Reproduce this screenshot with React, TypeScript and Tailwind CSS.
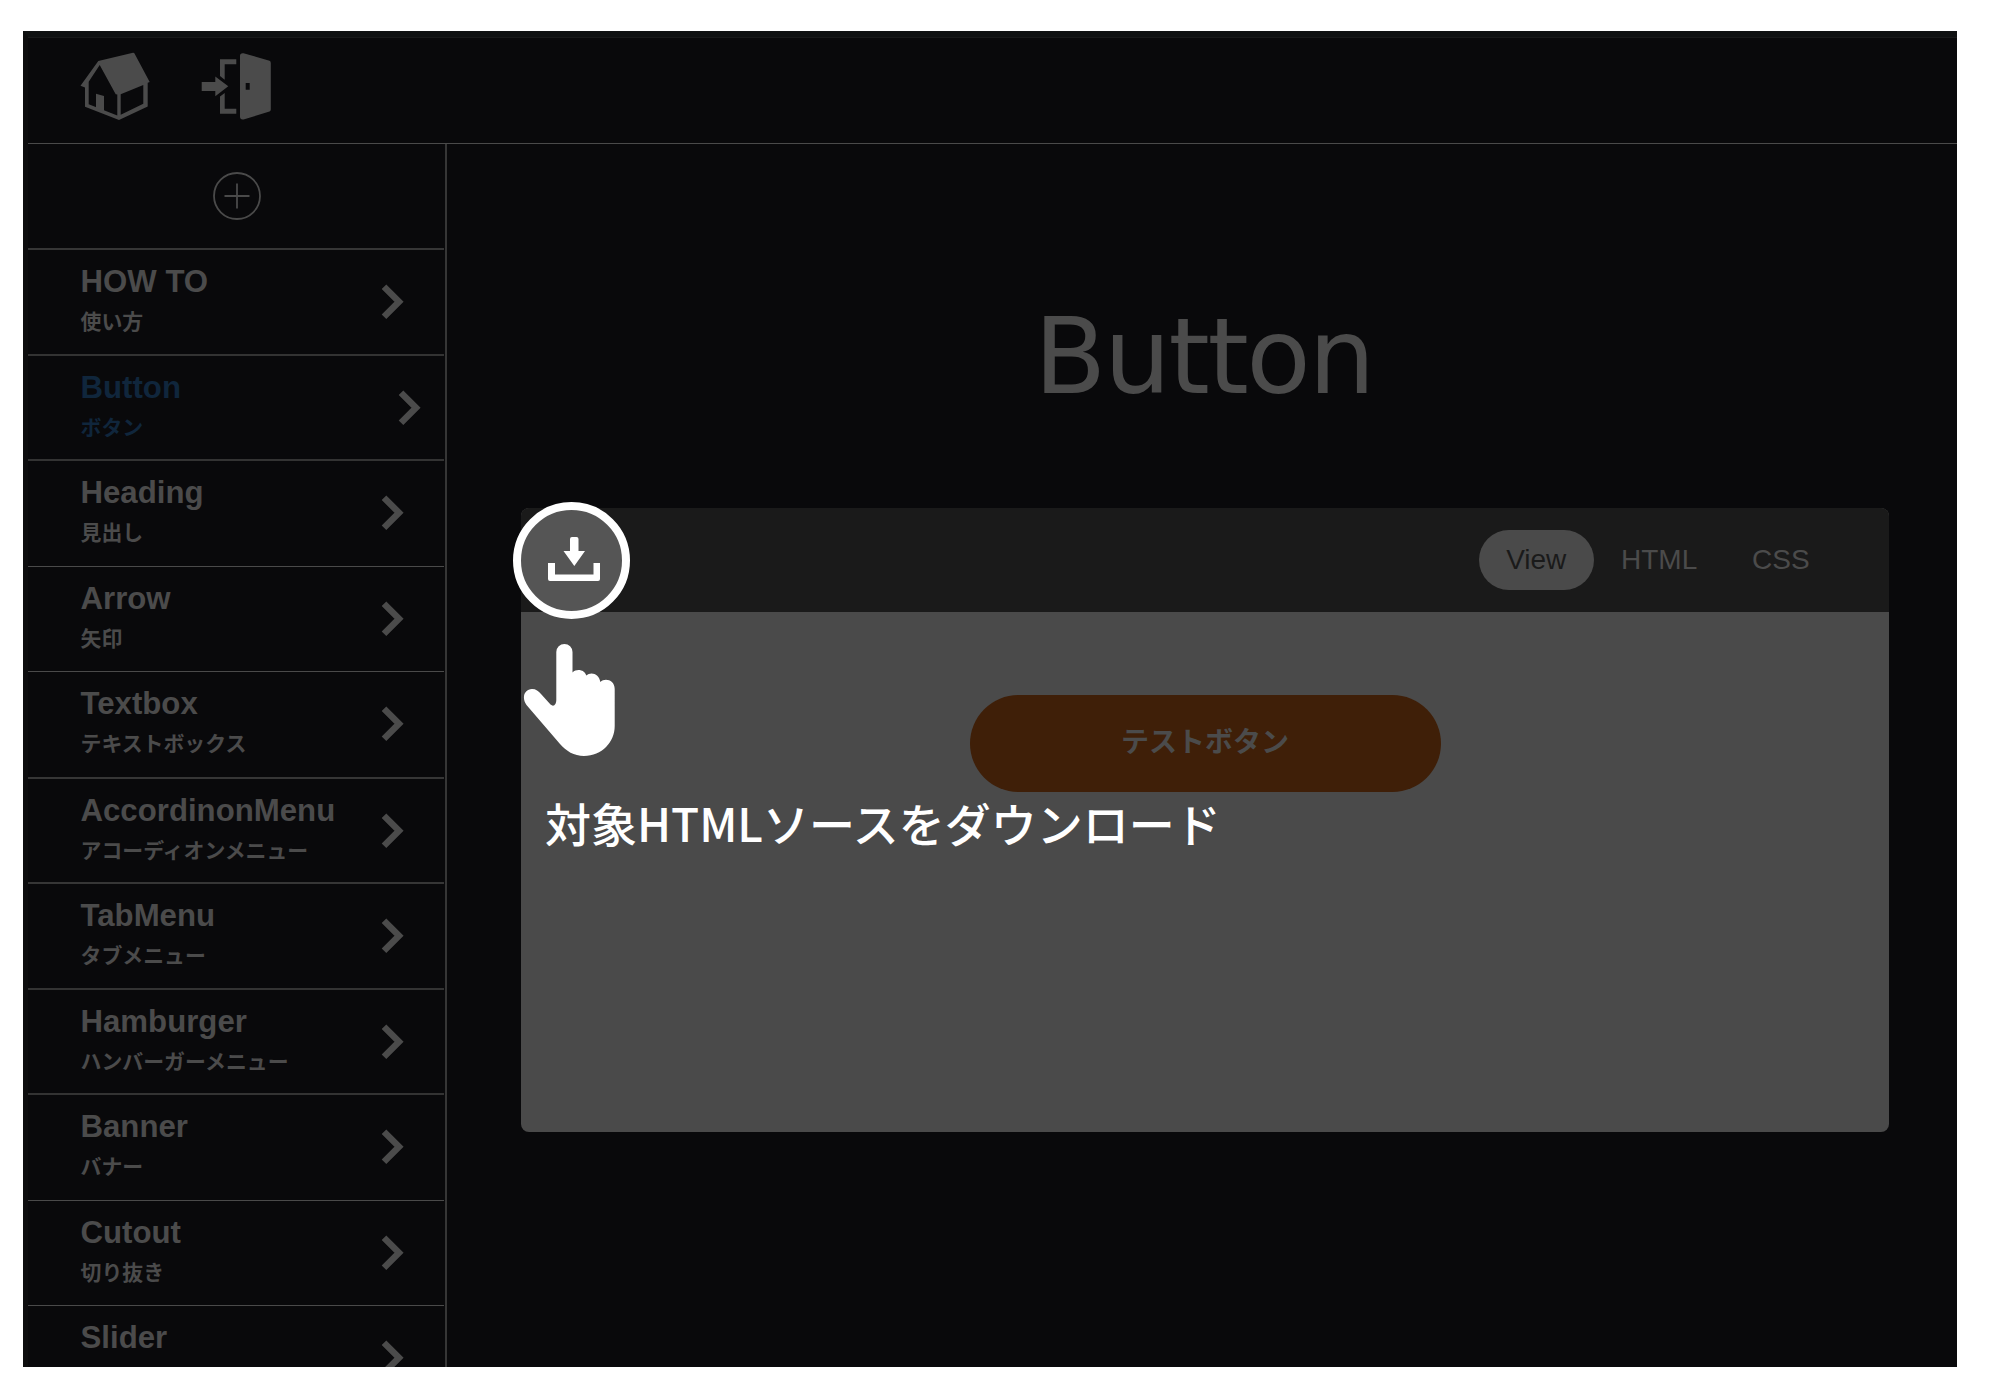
const items = [
  { en: 'HOW TO', ja: '使い方', line: 'h-[106px] border-b-2 border-[#333333]' },
  { en: 'Button', ja: 'ボタン', line: 'h-[105px] border-b-2 border-[#333333]', active: true },
  { en: 'Heading', ja: '見出し', line: 'h-[106px] border-b border-[#4a4a4a]' },
  { en: 'Arrow', ja: '矢印', line: 'h-[105px] border-b border-[#4a4a4a]' },
  { en: 'Textbox', ja: 'テキストボックス', line: 'h-[107px] border-b-2 border-[#363636]' },
  { en: 'AccordinonMenu', ja: 'アコーディオンメニュー', line: 'h-[105px] border-b-2 border-[#363636]' },
  { en: 'TabMenu', ja: 'タブメニュー', line: 'h-[106px] border-b-2 border-[#333333]' },
  { en: 'Hamburger', ja: 'ハンバーガーメニュー', line: 'h-[105px] border-b-2 border-[#333333]' },
  { en: 'Banner', ja: 'バナー', line: 'h-[106px] border-b border-[#4a4a4a]' },
  { en: 'Cutout', ja: '切り抜き', line: 'h-[105px] border-b border-[#4a4a4a]' },
  { en: 'Slider', ja: '', line: 'h-[106px]' },
];

function HouseIcon() {
  return (
    <svg width="70" height="69" viewBox="0 0 70 69" fill="#4b4b4b" fillRule="evenodd">
      <path d="M18.3 9 53 .8Q54 .6 54.500 1.500L69.700 30 67.700 30.800V54.500L39 68 5 54.800V35.500L.5 33.700Z M19.700 13 8.700 29.700V52.300L37.300 63.500V42.500L35.700 42.300Z M40.700 42.300V62.700L63.300 51.700V33Z" />
      <path d="M16 41.700 24 44V59.500L16 56.500Z" />
    </svg>
  );
}

function DoorIcon() {
  return (
    <svg width="70" height="69" viewBox="0 0 70 69" fill="#4b4b4b" fillRule="evenodd">
      <path d="M39 4Q39 .7 42.500 1.200L68.500 8.800Q69.800 9.300 69.800 11V57.500Q69.800 59 68.500 59.600L42.500 67.500Q39 68 39 64.500Z M44.700 31V37.700H48.700V31Z" />
      <path d="M19 7.300H35.300V12.300H23.700V27.700L19 24Z M19 61.700V44.500L23.700 41V56.700H35.300V61.700Z" />
      <path d="M.7 30H14.300V24.500L27.300 34.300 14.300 44.200V39H.7Z" />
    </svg>
  );
}

function Sidebar() {
  return (
    <nav className="w-[419px] shrink-0 border-r-2 border-[#363636] pr-px">
      <div className="flex h-[106px] items-center justify-center border-b-2 border-[#363636] pb-px pl-px">
        <svg width="48" height="48" viewBox="0 0 48 48" fill="none" stroke="#4a4a4a" strokeWidth="1.8">
          <circle cx="24" cy="24" r="23" />
          <path d="M24 11.500V36.500M11.500 24H36.500" />
        </svg>
      </div>
      {items.map((item) => (
        <div key={item.en} className={`flex justify-between pl-[52.5px] ${item.line}`}>
          <div className={item.active ? 'text-[#10263c]' : 'text-[#4b4b4b]'}>
            <div className="mt-[14px] font-['Liberation_Sans',sans-serif] text-[31.200px] leading-[35px] font-bold">{item.en}</div>
            {item.ja && (
              <div className="mt-[6px] font-['Noto_Sans_CJK_JP',sans-serif] text-[20.900px] leading-[30px] font-bold whitespace-nowrap">{item.ja}</div>
            )}
          </div>
          <svg
            className={item.active ? 'mt-[34px] mr-[23px]' : 'mt-[34px] mr-[40px]'}
            width="23" height="36" viewBox="0 0 23 36" fill="none" stroke="#4b4b4b" strokeWidth="6.500"
          >
            <path d="M3 2.700 18 17.700 3 32.700" />
          </svg>
        </div>
      ))}
    </nav>
  );
}

function Preview() {
  return (
    <section className="mt-[92px] ml-[73.5px] h-[624px] w-[1368px] overflow-hidden rounded-lg bg-[#4a4a4a]">
      <div className="flex h-[104px] items-center justify-end bg-[#1a1a1a] pr-[79.500px] font-['Liberation_Sans',sans-serif] text-[28px] text-[#4b4b4b]">
        <div className="flex h-[60px] w-[114.500px] items-center justify-center rounded-full bg-[#4a4a4a] text-[#1a1a1a]">View</div>
        <div className="ml-[27.500px] w-[131px]">HTML</div>
        <div className="w-[57px]">CSS</div>
      </div>
      <div className="flex justify-center pt-[83px] pl-px">
        <div className="flex h-[97px] w-[471px] items-center justify-center rounded-full bg-[#3f1f08] pb-[8px] font-['Noto_Sans_CJK_JP',sans-serif] text-[28px] font-bold text-[#4b4b4b]">
          テストボタン
        </div>
      </div>
    </section>
  );
}

export default function App() {
  return (
    <div className="relative h-[1400px] w-[2000px] overflow-hidden bg-white pt-[31px] pl-[23px]">
      <div className="flex h-[1336px] w-[1934px] flex-col overflow-hidden border-t-[6px] border-l-[5px] border-t-[#0f1112] border-l-[#0d0d0e] bg-[#09090b]">
        <header className="flex h-[107px] shrink-0 gap-[51px] border-t border-b border-t-[#18191a] border-b-[#4a4a4a] pt-[14px] pl-[52px]">
          <HouseIcon />
          <DoorIcon />
        </header>
        <div className="flex min-h-0 flex-1">
          <Sidebar />
          <main className="flex-1">
            <h1 className="mt-[148px] mb-[-6px] pl-[3px] text-center font-['DejaVu_Sans',sans-serif] text-[105.500px] leading-[130px] tracking-[-2.400px] text-[#4b4b4b]">
              Button
            </h1>
            <Preview />
          </main>
        </div>
      </div>

      <div className="absolute top-[502px] left-[513px] flex h-[117px] w-[117px] items-center justify-center rounded-full border-8 border-white bg-[#555555]">
        <svg className="relative top-[-2px] left-[2px]" width="52" height="46" viewBox="0 0 52 46" fill="#fff">
          <path d="M22 3Q22 1 24 1H28.500Q30.500 1 30.500 3V15H37L26.300 30 15.500 15H22Z" />
          <path d="M0 27H7V38.500H45.500V27H52V43Q52 45 50 45H2Q0 45 0 43Z" />
        </svg>
      </div>
      <svg className="absolute top-[643px] left-[523px]" width="92" height="114" viewBox="0 0 92 114" fill="#fff">
        <path d="M33.300 9A8.100 8.100 0 0 1 49.500 9V29.500C54 25 62 27 63.200 32.500C68 28 76.500 31 77.300 39C82 34.500 91.700 37 91.700 46V83C91.700 99 79 113 61 113C51 113 43 108 37 101L3.500 62C-2 54 2 46 9 46C13 46 15.500 48 18 51L27.500 61.500C31 64.500 33.300 61 33.300 57Z" />
      </svg>
      <p className="absolute top-[789px] left-[545px] font-['Noto_Sans_CJK_JP',sans-serif] text-[46px] leading-[66px] font-medium whitespace-nowrap text-white">
        対象HTMLソースをダウンロード
      </p>
    </div>
  );
}
